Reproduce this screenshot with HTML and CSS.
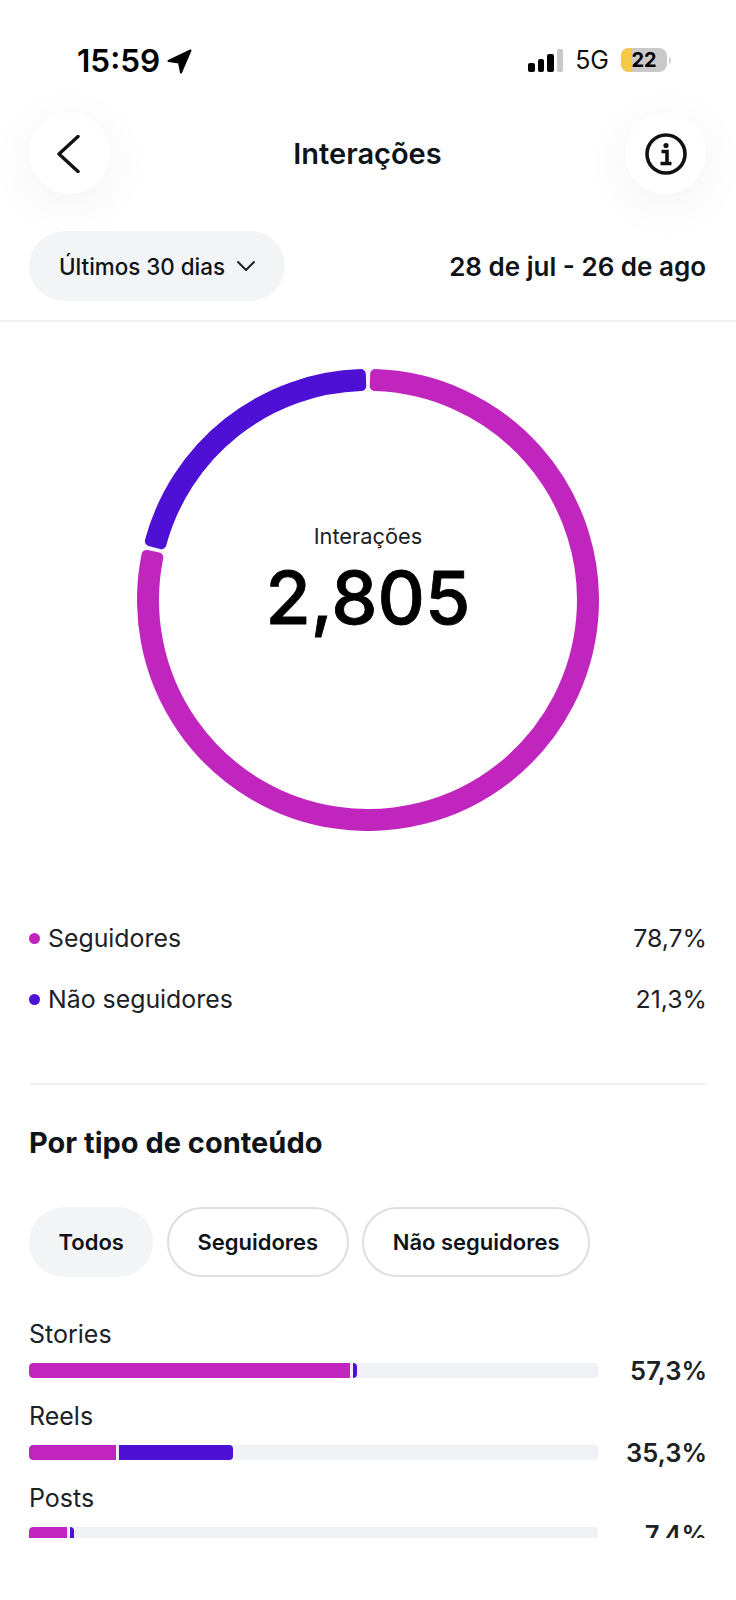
FILE: index.html
```html
<!DOCTYPE html>
<html lang="pt-BR">
<head>
    <meta charset="UTF-8">
    <meta name="viewport" content="width=device-width, initial-scale=1.0">
    <title>Interações</title>
    <link rel="stylesheet" href="styles.css">
</head>
<body>
    <div class="status-bar">
        <div class="status-time">
            <span>15:59</span>
            <svg class="location-icon" viewBox="0 0 24 24"><path d="M22.5 1.5 L1.5 11.5 L11.5 13 L13.5 22.5 Z"/></svg>
        </div>
        <div class="status-right">
            <div class="signal">
                <span class="signal-bar bar-1"></span>
                <span class="signal-bar bar-2"></span>
                <span class="signal-bar bar-3"></span>
                <span class="signal-bar bar-4"></span>
            </div>
            <span class="network">5G</span>
            <div class="battery"><span class="battery-level">22</span></div>
            <span class="battery-cap"></span>
        </div>
    </div>

    <div class="nav">
        <button class="round-btn">
            <svg class="back-icon" viewBox="0 0 24 38"><path d="M22 1.5 L3 19 L22 36.5"/></svg>
        </button>
        <h1>Interações</h1>
        <button class="round-btn">
            <svg class="info-icon" viewBox="0 0 42 42">
                <circle cx="21" cy="21" r="19"/>
                <circle class="info-dot" cx="21" cy="12.5" r="2.6"/>
                <path d="M16.5 18.5 H22 V30 M15.5 30.5 H26.5"/>
            </svg>
        </button>
    </div>

    <div class="filter-row">
        <div class="period-pill">
            <span>Últimos 30 dias</span>
            <svg class="caret" viewBox="0 0 20 12"><path d="M2 2 L10 10 L18 2"/></svg>
        </div>
        <div class="date-range">28 de jul - 26 de ago</div>
    </div>

    <main class="content">
        <div class="donut">
            <svg viewBox="0 0 462 462">
                <circle class="donut-track" cx="231" cy="231" r="220"/>
                <path class="arc arc-followers" d="M238.18 5.11 A226 226 0 1 1 9.52 186.02 L21.28 188.41 A214 214 0 1 0 237.8 17.11 Z"/>
                <path class="arc arc-others" d="M12.83 172.05 A226 226 0 0 1 223.82 5.11 L224.2 17.11 A214 214 0 0 0 24.41 175.18 Z"/>
            </svg>
            <div class="donut-label">
                <div class="donut-title">Interações</div>
                <div class="donut-value">2,805</div>
            </div>
        </div>

        <div class="legend">
            <div class="legend-row">
                <span class="legend-name"><i class="dot dot-followers"></i>Seguidores</span>
                <span>78,7%</span>
            </div>
            <div class="legend-row">
                <span class="legend-name"><i class="dot dot-others"></i>Não seguidores</span>
                <span>21,3%</span>
            </div>
        </div>

        <section class="by-type">
            <h2>Por tipo de conteúdo</h2>
            <div class="chips">
                <span class="chip chip-active">Todos</span>
                <span class="chip">Seguidores</span>
                <span class="chip">Não seguidores</span>
            </div>

            <div class="type-list">
                <div class="type-row">
                    <div class="type-name">Stories</div>
                    <div class="type-stat">
                        <div class="track">
                            <span class="seg seg-followers" style="width: 321px"></span>
                            <span class="seg seg-others" style="width: 4px"></span>
                        </div>
                        <span class="type-pct">57,3%</span>
                    </div>
                </div>
                <div class="type-row">
                    <div class="type-name">Reels</div>
                    <div class="type-stat">
                        <div class="track">
                            <span class="seg seg-followers" style="width: 87px"></span>
                            <span class="seg seg-others" style="width: 114px"></span>
                        </div>
                        <span class="type-pct">35,3%</span>
                    </div>
                </div>
                <div class="type-row">
                    <div class="type-name">Posts</div>
                    <div class="type-stat">
                        <div class="track">
                            <span class="seg seg-followers" style="width: 38px"></span>
                            <span class="seg seg-others" style="width: 4px"></span>
                        </div>
                        <span class="type-pct">7,4%</span>
                    </div>
                </div>
            </div>
        </section>
    </main>
</body>
</html>
```

FILE: styles.css
```css
body {
    margin: 0;
    background: #fff;
    color: #0f1419;
    font-family: Inter, "Liberation Sans", sans-serif;
}

/* status bar */
.status-bar {
    height: 113px;
    box-sizing: border-box;
    padding: 43px 65px 0 77px;
    display: flex;
    justify-content: space-between;
    align-items: flex-start;
}
.status-time {
    display: flex;
    align-items: center;
    gap: 7px;
    font-size: 31.5px;
    line-height: 36px;
    font-weight: 600;
    color: #000;
}
.location-icon {
    width: 25px;
    height: 25px;
    fill: #000;
    stroke: #000;
    stroke-width: 2;
    stroke-linejoin: round;
}
.status-right {
    display: flex;
    align-items: center;
    height: 34px;
}
.signal {
    display: flex;
    align-items: flex-end;
    gap: 3px;
    height: 23px;
    margin-right: 12px;
}
.signal-bar {
    width: 6.5px;
    background: #000;
    border-radius: 2px;
}
.bar-1 { height: 9px; }
.bar-2 { height: 13px; }
.bar-3 { height: 18px; }
.bar-4 { height: 23px; background: #c8c8c8; }
.network {
    font-size: 25px;
    color: #111;
    margin-right: 12px;
}
.battery {
    width: 46px;
    height: 24px;
    border-radius: 8px;
    overflow: hidden;
    background: #c9c9c9;
    position: relative;
}
.battery::before {
    content: "";
    display: block;
    width: 11px;
    height: 100%;
    background: #f5c945;
}
.battery-level {
    position: absolute;
    left: 0;
    right: 0;
    top: 0;
    text-align: center;
    font-size: 20px;
    line-height: 24px;
    font-weight: 700;
    color: #000;
}
.battery-cap {
    width: 2px;
    height: 7px;
    margin-left: 2px;
    background: #d5d5d5;
    border-radius: 0 2px 2px 0;
}

/* nav */
.nav {
    height: 81px;
    padding: 0 30px 0 29px;
    display: flex;
    justify-content: space-between;
    align-items: center;
}
.nav h1 {
    margin: 0;
    font-size: 29px;
    font-weight: 600;
}
.round-btn {
    width: 81px;
    height: 81px;
    padding: 0;
    border: 0;
    border-radius: 50%;
    background: #fff;
    box-shadow: 0 10px 50px rgba(0, 0, 0, 0.06);
    display: flex;
    align-items: center;
    justify-content: center;
}
.back-icon {
    width: 24px;
    height: 38px;
    margin-right: 4px;
    fill: none;
    stroke: #111;
    stroke-width: 3.4;
    stroke-linecap: round;
    stroke-linejoin: round;
}
.info-icon {
    width: 42px;
    height: 42px;
    fill: none;
    stroke: #111;
    stroke-width: 3.6;
}
.info-icon .info-dot {
    fill: #111;
    stroke: none;
}

/* filter row */
.filter-row {
    margin-top: 37px;
    padding: 0 30px 19px 29px;
    border-bottom: 2px solid #f1f1f5;
    display: flex;
    justify-content: space-between;
    align-items: center;
}
.period-pill {
    width: 256px;
    height: 70px;
    box-sizing: border-box;
    padding-left: 30px;
    border-radius: 35px;
    background: #f3f4f6;
    display: flex;
    align-items: center;
    gap: 11px;
    font-size: 22.4px;
    font-weight: 500;
}
.caret {
    width: 20px;
    height: 12px;
    fill: none;
    stroke: #1c2126;
    stroke-width: 2;
    stroke-linecap: round;
    stroke-linejoin: round;
}
.date-range {
    font-size: 26px;
    font-weight: 600;
}

/* donut */
.content {
    height: 1216px;
    overflow: hidden;
    padding: 0 30px 0 29px;
}
.donut {
    width: 462px;
    height: 462px;
    margin: 47px auto 0;
    position: relative;
    left: 0.5px;
}
.donut svg {
    display: block;
    width: 462px;
    height: 462px;
}
.donut-track {
    fill: none;
    stroke: #f2f2f7;
    stroke-width: 20;
}
.arc {
    stroke-width: 10;
    stroke-linejoin: round;
}
.arc-followers {
    fill: #c026bd;
    stroke: #c026bd;
}
.arc-others {
    fill: #4f10d6;
    stroke: #4f10d6;
}
.donut-label {
    position: absolute;
    left: 0;
    right: 0;
    top: 152px;
    text-align: center;
}
.donut-title {
    font-size: 21.8px;
    line-height: 30px;
    color: #1c2126;
}
.donut-value {
    font-size: 73.5px;
    line-height: 94px;
    font-weight: 500;
    color: #000;
    -webkit-text-stroke: 0.8px #000;
}

/* legend */
.legend {
    margin-top: 92px;
    margin-right: -1px;
    display: flex;
    flex-direction: column;
    gap: 31px;
}
.legend-row {
    display: flex;
    justify-content: space-between;
    font-size: 24.85px;
    line-height: 30px;
    color: #1c2126;
}
.legend-name {
    display: flex;
    align-items: center;
    gap: 8px;
}
.dot {
    width: 11px;
    height: 11px;
    border-radius: 50%;
}
.dot-followers { background: #c026bd; }
.dot-others { background: #4f10d6; }

/* by content type */
.by-type {
    margin-top: 69px;
    padding-top: 40px;
    border-top: 2px solid #f1f1f5;
}
.by-type h2 {
    margin: 0;
    font-size: 29px;
    line-height: 36px;
    font-weight: 700;
}
.chips {
    margin-top: 46px;
    display: flex;
    gap: 13.5px;
}
.chip {
    height: 70px;
    box-sizing: border-box;
    padding: 0 28.5px;
    border: 2px solid #dedede;
    border-radius: 35px;
    display: flex;
    align-items: center;
    font-size: 22px;
    font-weight: 600;
}
.chip-active {
    padding: 0 29.5px;
    border: 0;
    background: #f3f4f6;
}
.type-list {
    margin-top: 41px;
    display: flex;
    flex-direction: column;
    gap: 23px;
}
.type-row {
    height: 59px;
}
.type-name {
    font-size: 25px;
    line-height: 32px;
    color: #1c2126;
}
.type-stat {
    margin-top: 13px;
    display: flex;
    justify-content: space-between;
    align-items: center;
    height: 15px;
}
.track {
    width: 569px;
    height: 15px;
    border-radius: 4px;
    overflow: hidden;
    background: #f0f1f5;
    display: flex;
    gap: 3px;
}
.seg {
    height: 100%;
}
.seg-followers {
    background: #c026bd;
    border-radius: 4px 0 0 4px;
}
.seg-others {
    background: #4f10d6;
    border-radius: 0 4px 4px 0;
}
.type-pct {
    margin-right: -1px;
    font-size: 25.5px;
    font-weight: 600;
    color: #1c2126;
}
```
